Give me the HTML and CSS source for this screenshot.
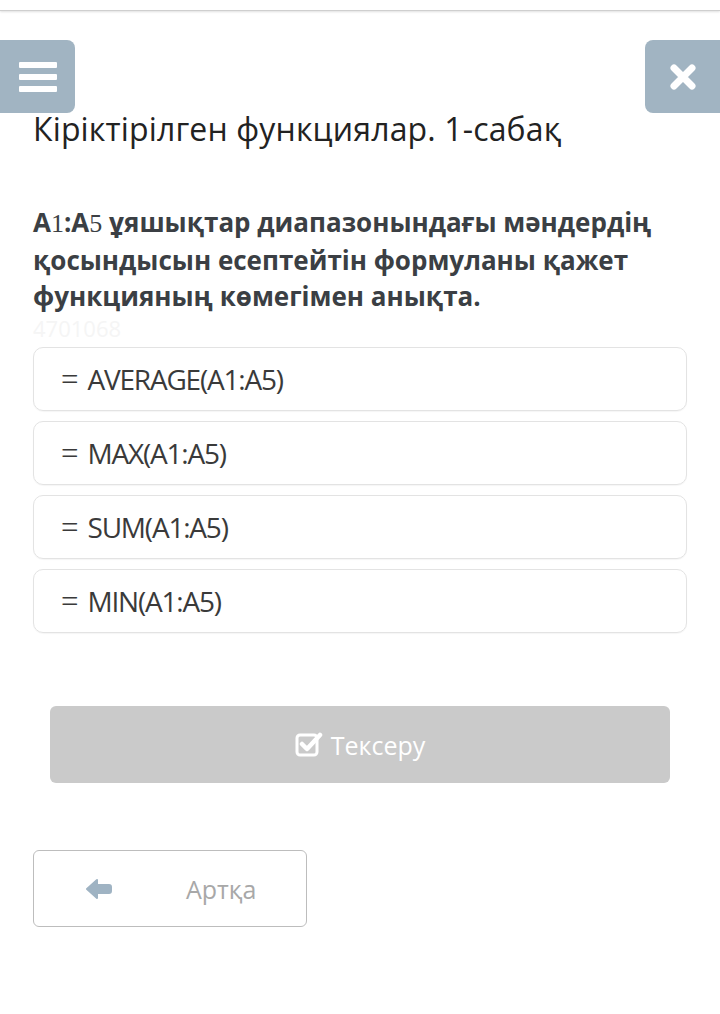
FILE: index.html
```html
<!DOCTYPE html>
<html>
<head>
<meta charset="utf-8">
<link rel="stylesheet" href="styles.css">
</head>
<body>
<div class="topline"></div>
<div class="toolbar">
  <div class="tbtn">
    <svg width="38" height="30" viewBox="0 0 38 30"><rect x="0" y="0" width="38" height="6" rx="1" fill="#fff"/><rect x="0" y="12" width="38" height="6" rx="1" fill="#fff"/><rect x="0" y="24" width="38" height="6" rx="1" fill="#fff"/></svg>
  </div>
  <div class="tbtn">
    <svg width="28" height="28" viewBox="0 0 28 28"><path d="M5 5 L23 23 M23 5 L5 23" stroke="#fff" stroke-width="7" stroke-linecap="round"/></svg>
  </div>
</div>
<main class="content">
  <h1 class="title">Кіріктірілген функциялар. 1-сабақ</h1>
  <p class="question">A<span class="m">1</span>:A<span class="m">5</span> ұяшықтар диапазонындағы мәндердің қосындысын есептейтін формуланы қажет функцияның көмегімен анықта.</p>
  <div class="qid">4701068</div>
  <div class="options">
    <div class="opt"><span class="eq">=</span><span class="ot">AVERAGE(A1:A5)</span></div>
    <div class="opt"><span class="eq">=</span><span class="ot">MAX(A1:A5)</span></div>
    <div class="opt"><span class="eq">=</span><span class="ot">SUM(A1:A5)</span></div>
    <div class="opt"><span class="eq">=</span><span class="ot">MIN(A1:A5)</span></div>
  </div>
  <div class="check-wrap">
    <div class="check">
      <svg width="28" height="26" viewBox="0 0 28 26"><rect x="2" y="3" width="20" height="20" rx="3" fill="none" stroke="#fff" stroke-width="3"/><path d="M7 12 L12 17 L25 3" fill="none" stroke="#fff" stroke-width="4.5" stroke-linecap="round" stroke-linejoin="round"/></svg>
      <span>Тексеру</span>
    </div>
  </div>
  <div class="back">
    <svg width="26" height="22" viewBox="0 0 26 22"><path d="M1 11 L11 2 L11 7 L23 7 Q25 7 25 9 L25 13 Q25 15 23 15 L11 15 L11 20 Z" fill="#9fb3c3" stroke="#9fb3c3" stroke-width="2" stroke-linejoin="round"/></svg>
    <span>Артқа</span>
  </div>
</main>
</body>
</html>
```
FILE: styles.css
```css
html, body {
  margin: 0;
  padding: 0;
  background: #fff;
  font-family: "Open Sans", "Noto Sans", sans-serif;
  color: #222;
}
.topline {
  height: 10px;
  border-bottom: 1px solid #cfcfcf;
  box-shadow: 0 1px 2px rgba(0,0,0,0.12);
}
.toolbar {
  display: flex;
  justify-content: space-between;
  margin-top: 29px;
  height: 0;
  position: relative;
  z-index: 2;
}
.tbtn {
  width: 75px;
  height: 73px;
  background: #a1b4c2;
  display: flex;
  align-items: center;
  justify-content: center;
}
.tbtn:first-child {
  border-radius: 0 8px 8px 0;
}
.tbtn:last-child {
  border-radius: 8px 0 0 8px;
}
.content {
  padding: 0 33px;
}
.title {
  margin: 0;
  padding-top: 66px;
  font-size: 32px;
  font-weight: 400;
  line-height: 46px;
  color: #222;
  letter-spacing: 0.15px;
}
.question {
  margin: 52px 0 0;
  font-size: 26px;
  font-weight: 700;
  line-height: 36px;
  color: #3b3f44;
}
.m {
  font-family: "Liberation Serif", "DejaVu Serif", serif;
  font-weight: 400;
}
.qid {
  font-size: 22px;
  color: #f5f5f5;
  line-height: 26px;
  margin-top: 1px;
}
.options {
  display: flex;
  flex-direction: column;
  gap: 10px;
  margin-top: 6px;
}
.opt {
  height: 62px;
  border: 1px solid #e3e3e3;
  border-radius: 10px;
  display: flex;
  align-items: center;
  padding-left: 27px;
  font-size: 28px;
  color: #3a3a3a;
  box-shadow: 0 1px 1px rgba(0,0,0,0.04);
}
.ot {
  font-stretch: 88%;
  font-weight: 400;
  letter-spacing: -1.2px;
}
.eq {
  font-family: "Liberation Serif", serif;
  margin-right: 9px;
  font-size: 31px;
  line-height: 1;
}
.check-wrap {
  padding: 73px 17px 0;
}
.check {
  height: 77px;
  background: #cacaca;
  border-radius: 6px;
  display: flex;
  align-items: center;
  justify-content: center;
  gap: 8px;
  color: #fff;
  font-size: 25px;
}
.back {
  margin-top: 67px;
  width: 272px;
  height: 75px;
  border: 1px solid #bdbdbd;
  border-radius: 6px;
  display: flex;
  align-items: center;
  color: #a8a8a8;
  font-size: 25px;
}
.back svg {
  margin-left: 52px;
}
.back span {
  margin-left: 74px;
}
```
